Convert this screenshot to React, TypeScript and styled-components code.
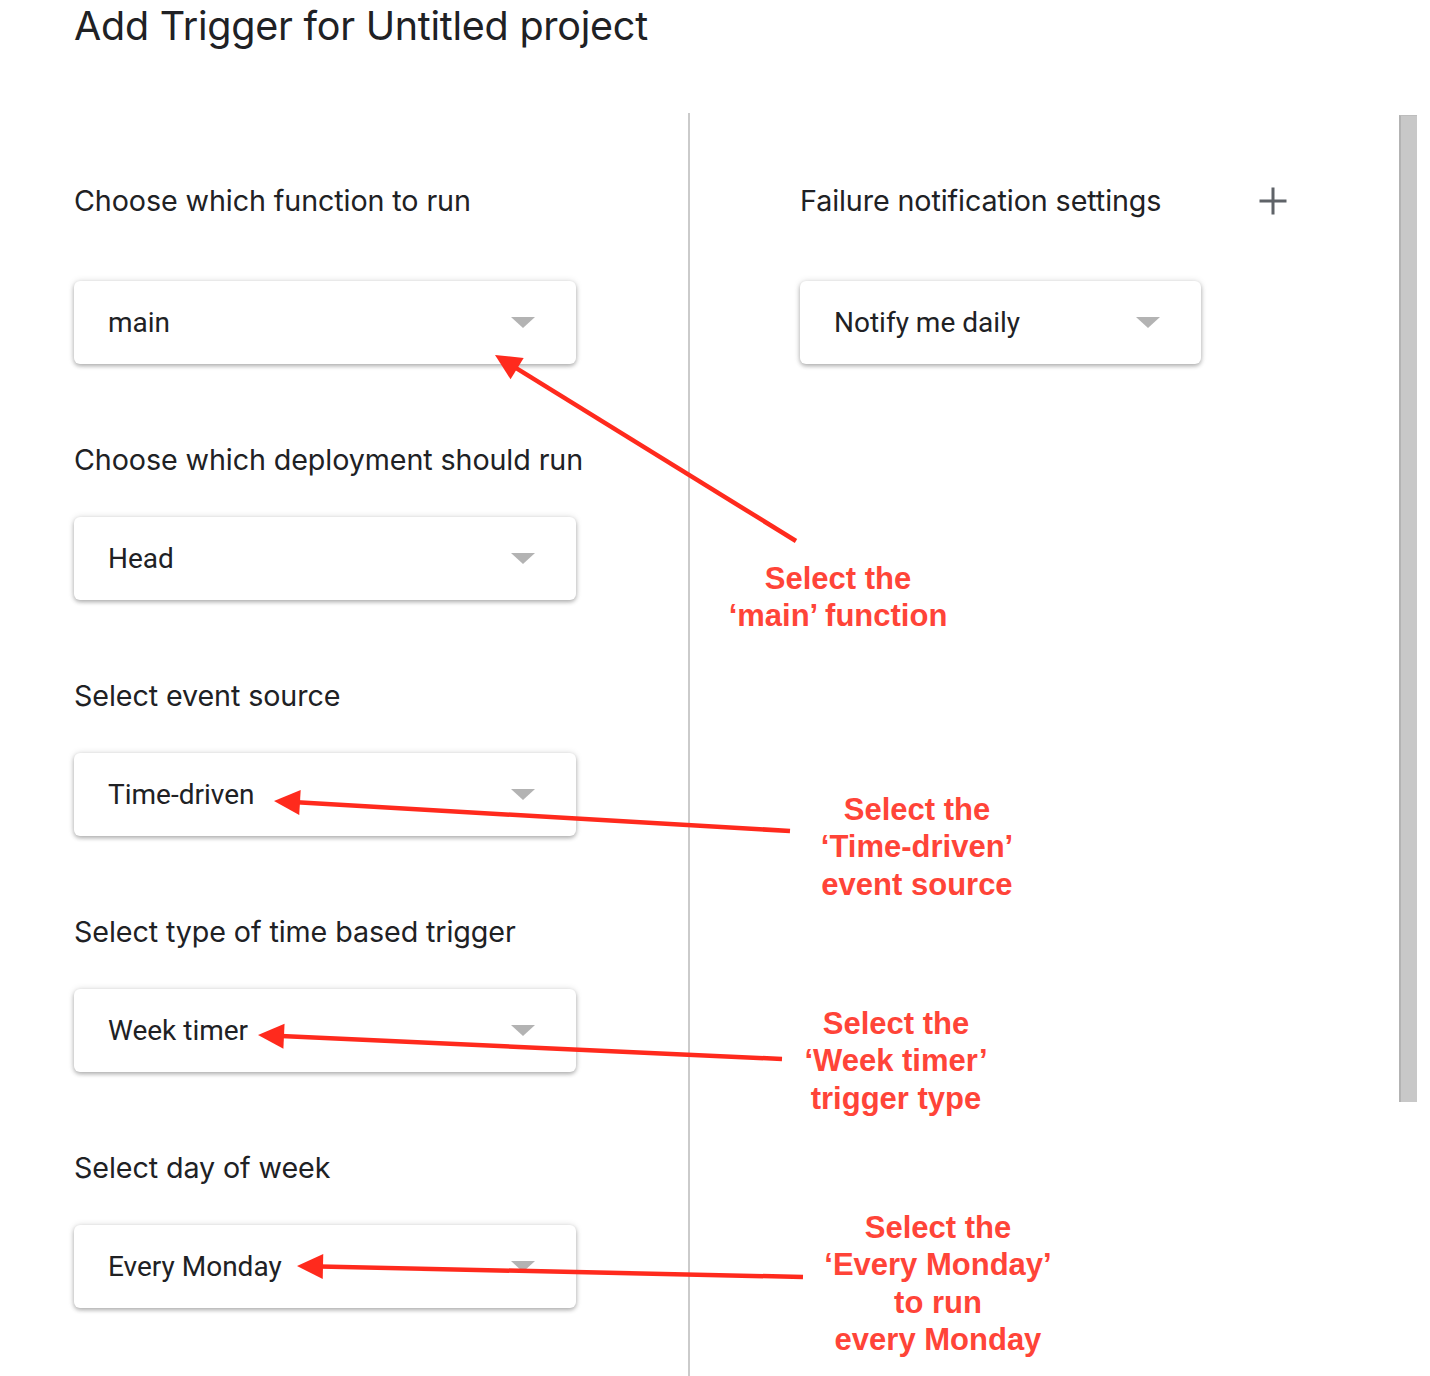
import React from "react";
import styled, { createGlobalStyle } from "styled-components";

const GlobalStyle = createGlobalStyle`
  html, body { margin: 0; padding: 0; background: #ffffff; }
  body { font-family: Roboto, "Noto Sans", Arial, sans-serif; color: #202124; }
  * { box-sizing: border-box; }
`;

const Page = styled.div`
  position: relative;
  width: 1430px;
  height: 1376px;
  overflow: hidden;
  display: flex;
  flex-direction: column;
  background: #fff;
`;

const Title = styled.h1`
  flex-shrink: 0;
  margin: 0;
  padding: 0 0 0 74px;
  height: 113px;
  font-family: Inter, Roboto, "Noto Sans", sans-serif;
  font-weight: 400;
  font-size: 39.5px;
  line-height: 52px;
  color: #202124;
  letter-spacing: -0.25px;
`;

const Body = styled.div`
  flex: 1;
  min-height: 0;
  display: flex;
  align-items: stretch;
`;

const LeftColumn = styled.div`
  width: 688px;
  padding: 71px 0 0 74px;
  display: flex;
  flex-direction: column;
`;

const Divider = styled.div`
  width: 2px;
  background: #cbcbcb;
`;

const RightColumn = styled.div`
  flex: 1;
  padding: 71px 0 0 110px;
  display: flex;
  flex-direction: column;
`;

const Scrollbar = styled.div`
  align-self: flex-start;
  margin: 2px 13px 0 0;
  width: 18px;
  height: 987px;
  background: #c8c8c8;
  border-left: 2px solid #b3b3b3;
  border-top: 1px solid #bdbdbd;
`;

const Field = styled.div`
  display: flex;
  flex-direction: column;
  margin-bottom: 79px;
`;

const Label = styled.div<{ $gap: number }>`
  font-family: Inter, Roboto, "Noto Sans", sans-serif;
  font-size: 28.7px;
  line-height: 34px;
  height: 34px;
  color: #202124;
  white-space: nowrap;
  letter-spacing: -0.1px;
  margin-bottom: ${(p) => p.$gap}px;
`;

const HeaderRow = styled.div`
  width: 488px;
  display: flex;
  align-items: center;
  justify-content: space-between;
  margin-bottom: 63px;
`;

const HeaderLabel = styled.div`
  font-family: Inter, Roboto, "Noto Sans", sans-serif;
  font-size: 28.7px;
  line-height: 34px;
  height: 34px;
  color: #202124;
  white-space: nowrap;
  letter-spacing: -0.1px;
`;

const Select = styled.div<{ $width: number }>`
  width: ${(p) => p.$width}px;
  height: 83px;
  border-radius: 6px;
  background: #fff;
  box-shadow: 0 2px 4px rgba(0, 0, 0, 0.28), 0 0 7px rgba(0, 0, 0, 0.12);
  display: flex;
  align-items: center;
  justify-content: space-between;
  padding: 0 41px 0 34px;
`;

const SelectText = styled.span`
  font-family: Roboto, "Noto Sans", sans-serif;
  font-size: 28px;
  color: #202124;
`;

const Caret = styled.span`
  width: 0;
  height: 0;
  border-left: 12px solid transparent;
  border-right: 12px solid transparent;
  border-top: 11px solid #b3b3b3;
`;

const Overlay = styled.svg`
  position: absolute;
  left: 0;
  top: 0;
  pointer-events: none;
`;

const Note = styled.div<{ $cx: number; $top: number }>`
  position: absolute;
  left: ${(p) => p.$cx - 200}px;
  top: ${(p) => p.$top}px;
  width: 400px;
  text-align: center;
  font-family: "Liberation Sans", Arial, Helvetica, sans-serif;
  font-weight: 700;
  font-size: 31px;
  line-height: 37.3px;
  color: #ff4438;
  white-space: pre-line;
`;

type ArrowDef = { from: [number, number]; tip: [number, number] };

const arrows: ArrowDef[] = [
  { from: [796, 541], tip: [495, 355] },
  { from: [790, 831], tip: [274, 801] },
  { from: [782, 1059], tip: [258, 1035] },
  { from: [803, 1277], tip: [297, 1266] },
];

function Arrow({ from, tip }: ArrowDef) {
  const dx = from[0] - tip[0];
  const dy = from[1] - tip[1];
  const len = Math.hypot(dx, dy);
  const ux = dx / len;
  const uy = dy / len;
  const headLen = 26;
  const half = 12.5;
  const bx = tip[0] + ux * headLen;
  const by = tip[1] + uy * headLen;
  const px = -uy;
  const py = ux;
  const pts = `${tip[0]},${tip[1]} ${bx + px * half},${by + py * half} ${bx - px * half},${by - py * half}`;
  return (
    <g>
      <line
        x1={from[0]}
        y1={from[1]}
        x2={tip[0] + ux * (headLen - 3)}
        y2={tip[1] + uy * (headLen - 3)}
        stroke="#ff2a1d"
        strokeWidth={4.5}
      />
      <polygon points={pts} fill="#ff2a1d" />
    </g>
  );
}

const fields = [
  { label: "Choose which function to run", value: "main", gap: 63 },
  { label: "Choose which deployment should run", value: "Head", gap: 40 },
  { label: "Select event source", value: "Time-driven", gap: 40 },
  { label: "Select type of time based trigger", value: "Week timer", gap: 40 },
  { label: "Select day of week", value: "Every Monday", gap: 40 },
];

const notes = [
  { cx: 838, top: 560, text: "Select the\n‘main’ function" },
  { cx: 917, top: 791, text: "Select the\n‘Time-driven’\nevent source" },
  { cx: 896, top: 1005, text: "Select the\n‘Week timer’\ntrigger type" },
  { cx: 938, top: 1209, text: "Select the\n‘Every Monday’\nto run\nevery Monday" },
];

export default function App() {
  return (
    <>
      <GlobalStyle />
      <Page>
        <Title>Add Trigger for Untitled project</Title>
        <Body>
          <LeftColumn>
            {fields.map((f) => (
              <Field key={f.label}>
                <Label $gap={f.gap}>{f.label}</Label>
                <Select $width={502}>
                  <SelectText>{f.value}</SelectText>
                  <Caret />
                </Select>
              </Field>
            ))}
          </LeftColumn>
          <Divider />
          <RightColumn>
            <HeaderRow>
              <HeaderLabel>Failure notification settings</HeaderLabel>
              <svg width="30" height="30" viewBox="0 0 30 30">
                <path d="M15 1.5v27M1.5 15h27" stroke="#5f6368" strokeWidth="3" fill="none" />
              </svg>
            </HeaderRow>
            <Select $width={401}>
              <SelectText>Notify me daily</SelectText>
              <Caret />
            </Select>
          </RightColumn>
          <Scrollbar />
        </Body>
        <Overlay width={1430} height={1376} viewBox="0 0 1430 1376">
          {arrows.map((a, i) => (
            <Arrow key={i} {...a} />
          ))}
        </Overlay>
        {notes.map((n) => (
          <Note key={n.top} $cx={n.cx} $top={n.top}>
            {n.text}
          </Note>
        ))}
      </Page>
    </>
  );
}
